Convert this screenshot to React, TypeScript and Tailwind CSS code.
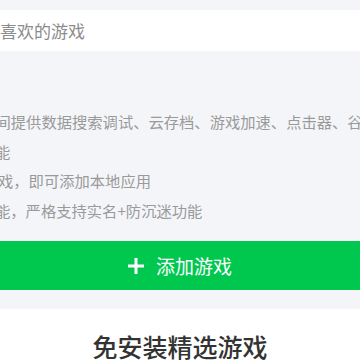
import React from "react";

export default function App() {
  return (
    <div className="w-[360px] h-[360px] overflow-hidden bg-[#f4f5f8] font-['Noto_Sans_CJK_SC','Noto_Sans',sans-serif] pt-[10px]">
      <div className="h-[41px] bg-white flex items-center text-[17px] text-[#8c8c8c] whitespace-nowrap">
        喜欢的游戏
      </div>
      <div className="pt-[56px] text-[15.3px] leading-[29.5px] text-[#9a9a9a] whitespace-nowrap">
        <div className="-ml-[4.5px]">间提供数据搜索调试、云存档、游戏加速、点击器、谷歌</div>
        <div className="-ml-[5px]">能</div>
        <div className="-ml-[2px]">戏，即可添加本地应用</div>
        <div className="-ml-[5px]">能，严格支持实名+防沉迷功能</div>
      </div>
      <button className="mt-[16px] w-full h-[49px] bg-[#00c84f] flex items-center justify-center gap-[12px] text-white">
        <svg width="16" height="16" viewBox="0 0 16 16">
          <rect x="0" y="6.5" width="16" height="3" fill="white" />
          <rect x="6.5" y="0" width="3" height="16" fill="white" />
        </svg>
        <span className="text-[19px] leading-none">添加游戏</span>
      </button>
      <div className="mt-[19px] bg-white h-[60px] pt-[20px] flex justify-center">
        <div className="text-[25px] leading-[35px] text-[#333] font-medium">免安装精选游戏</div>
      </div>
    </div>
  );
}
